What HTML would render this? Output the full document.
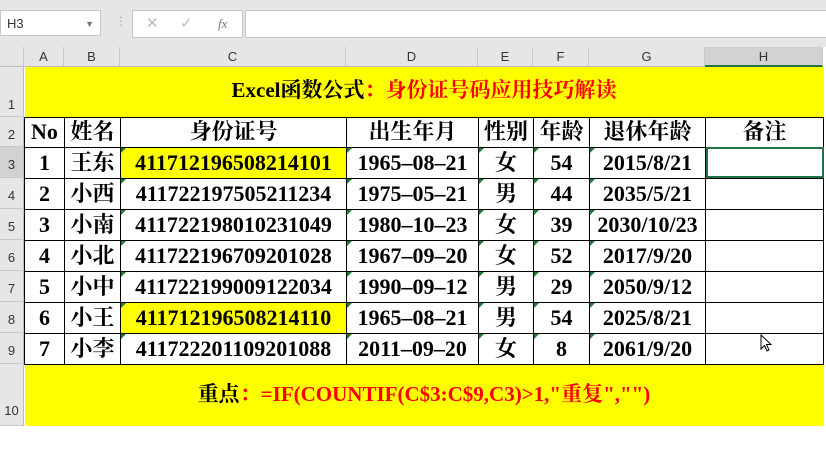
<!DOCTYPE html><html><head><style>
body{margin:0;width:826px;height:426px;overflow:hidden;background:#fff;font-family:"Liberation Sans",sans-serif;position:relative}
.a{position:absolute}
#top{left:0;top:0;width:826px;height:47px;background:#e6e6e6}
.box{background:#fff;border:1px solid #c6c6c6;position:absolute}
.ch{position:absolute;top:47px;height:20px;background:#e6e6e6;border-right:1px solid #c8c8c8;border-bottom:1px solid #bdbdbd;box-sizing:border-box;font-size:13px;color:#333;text-align:center;line-height:20px}
.rh{position:absolute;left:0;width:24px;background:#e6e6e6;border-bottom:1px solid #c8c8c8;border-right:1px solid #bdbdbd;box-sizing:border-box;font-size:13px;color:#333;text-align:center}
table{position:absolute;left:24px;top:67px;border-collapse:collapse;table-layout:fixed;font-family:"Liberation Serif","Noto Serif CJK SC",serif;font-weight:bold;font-size:22px}
td{border:1px solid #000;padding:0;text-align:center;height:30px;box-sizing:border-box;position:relative;white-space:nowrap;line-height:28px}
.y{background:#ff0}
.t{border:none;background:#ff0;color:#000;font-size:21px}
.r{color:#f00}
.g:before{content:"";position:absolute;left:0;top:0;border-top:5px solid #1e7b34;border-right:5px solid transparent}
</style></head><body>
<div id="top" class="a"></div>
<div class="box" style="left:0;top:10px;width:101px;height:26px;font-size:13px;line-height:26px;padding-left:6px;box-sizing:border-box;color:#333">H3<span style="position:absolute;right:6px;top:0;color:#777;font-size:9px">▼</span></div>
<div class="a" style="left:115px;top:14px;color:#aaa;font-size:12px">⋮</div>
<div class="box" style="left:132px;top:10px;width:109px;height:26px;color:#bbb;font-size:15px;line-height:26px"><span style="position:absolute;left:13px">✕</span><span style="position:absolute;left:47px">✓</span><span style="position:absolute;left:85px;font-family:'Liberation Serif',serif;font-style:italic;font-size:13px;color:#777">fx</span></div>
<div class="box" style="left:245px;top:10px;width:590px;height:26px"></div>
<div class="ch" style="left:0;width:24px;background:#e6e6e6"></div>
<div class="ch" style="left:24px;width:40px">A</div>
<div class="ch" style="left:64px;width:56px">B</div>
<div class="ch" style="left:120px;width:226px">C</div>
<div class="ch" style="left:346px;width:132px">D</div>
<div class="ch" style="left:478px;width:55px">E</div>
<div class="ch" style="left:533px;width:56px">F</div>
<div class="ch" style="left:589px;width:116px">G</div>
<div class="ch" style="left:705px;width:118px;background:#d2d2d2;border-bottom:2px solid #217346">H</div>
<div class="rh" style="top:67px;height:50px;line-height:76px">1</div>
<div class="rh" style="top:117px;height:30px;line-height:36px">2</div>
<div class="rh" style="top:147px;height:31px;line-height:36px;background:#d2d2d2">3</div>
<div class="rh" style="top:178px;height:31px;line-height:36px">4</div>
<div class="rh" style="top:209px;height:31px;line-height:36px">5</div>
<div class="rh" style="top:240px;height:31px;line-height:36px">6</div>
<div class="rh" style="top:271px;height:31px;line-height:36px">7</div>
<div class="rh" style="top:302px;height:31px;line-height:36px">8</div>
<div class="rh" style="top:333px;height:31px;line-height:36px">9</div>
<div class="rh" style="top:364px;height:62px;line-height:94px">10</div>
<table>
<colgroup><col style="width:40px"><col style="width:56px"><col style="width:226px"><col style="width:132px"><col style="width:55px"><col style="width:56px"><col style="width:116px"><col style="width:118px"></colgroup>
<tr><td colspan="8" class="t" style="height:50px;padding-bottom:4px">Excel函数公式<span class="r">：身份证号码应用技巧解读</span></td></tr>
<tr><td>No</td><td>姓名</td><td>身份证号</td><td>出生年月</td><td>性别</td><td>年龄</td><td>退休年龄</td><td>备注</td></tr>
<tr style="height:31px"><td>1</td><td>王东</td><td class="y g">411712196508214101</td><td class="g">1965–08–21</td><td class="g">女</td><td class="g">54</td><td class="g">2015/8/21</td><td style="outline:2px solid #217346;outline-offset:-2px"></td></tr>
<tr style="height:31px"><td>2</td><td>小西</td><td class="g">411722197505211234</td><td class="g">1975–05–21</td><td class="g">男</td><td class="g">44</td><td class="g">2035/5/21</td><td></td></tr>
<tr style="height:31px"><td>3</td><td>小南</td><td class="g">411722198010231049</td><td class="g">1980–10–23</td><td class="g">女</td><td class="g">39</td><td class="g">2030/10/23</td><td></td></tr>
<tr style="height:31px"><td>4</td><td>小北</td><td class="g">411722196709201028</td><td class="g">1967–09–20</td><td class="g">女</td><td class="g">52</td><td class="g">2017/9/20</td><td></td></tr>
<tr style="height:31px"><td>5</td><td>小中</td><td class="g">411722199009122034</td><td class="g">1990–09–12</td><td class="g">男</td><td class="g">29</td><td class="g">2050/9/12</td><td></td></tr>
<tr style="height:31px"><td>6</td><td>小王</td><td class="y g">411712196508214110</td><td class="g">1965–08–21</td><td class="g">男</td><td class="g">54</td><td class="g">2025/8/21</td><td></td></tr>
<tr style="height:31px"><td>7</td><td>小李</td><td class="g">411722201109201088</td><td class="g">2011–09–20</td><td class="g">女</td><td class="g">8</td><td class="g">2061/9/20</td><td></td></tr>
<tr><td colspan="8" class="t" style="height:62px;padding-bottom:2px">重点<span class="r">：=IF(COUNTIF(C$3:C$9,C3)&gt;1,"重复","")</span></td></tr>
</table>
<svg class="a" style="left:760px;top:334px" width="14" height="20"><path d="M1 1 L1 15 L4.5 11.5 L7 17 L9 16 L6.5 10.5 L11 10.5 Z" fill="#fff" stroke="#000" stroke-width="1"/></svg>
</body></html>
